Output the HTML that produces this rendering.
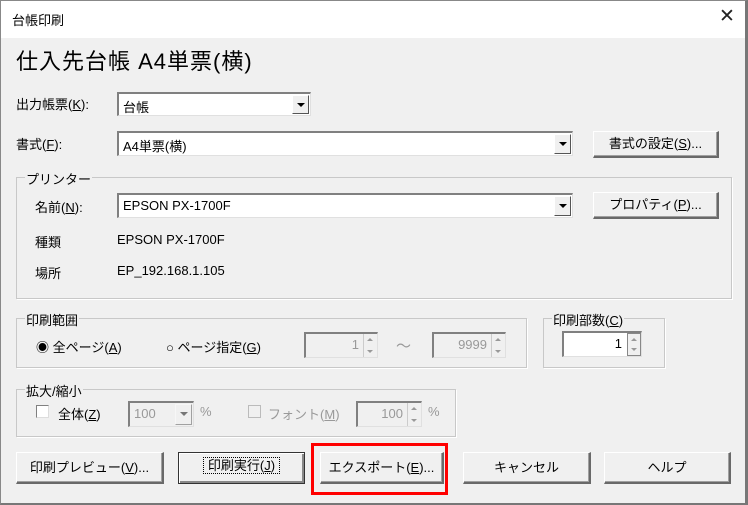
<!DOCTYPE html>
<html><head><meta charset="utf-8"><style>
*{box-sizing:border-box;margin:0;padding:0}
body{width:748px;height:505px;background:#fff;font-family:"Liberation Sans","Noto Sans CJK JP",sans-serif;font-size:13px;color:#000;position:relative;overflow:hidden}
.win{position:absolute;left:0;top:0;width:748px;height:505px;border:1px solid #888;border-right:3px solid #777;border-bottom:2px solid #777}
.client{position:absolute;left:1px;top:38px;right:3px;bottom:2px;background:#f0f0f0}
.a{position:absolute;white-space:nowrap}
.sunk{position:absolute;background:#fff;border-top:2px solid #808080;border-left:2px solid #808080;border-bottom:1px solid #e0e0e0;border-right:1px solid #e0e0e0}
.dis{background:#f0f0f0;color:#999}
.dd{position:absolute;right:1px;top:1px;bottom:1px;width:17px;background:#f0f0f0;border-right:1px solid #555;border-bottom:1px solid #555;border-top:1px solid #fff;border-left:1px solid #fff}
.dd:after{content:"";position:absolute;left:4px;top:7px;border-left:4px solid transparent;border-right:4px solid transparent;border-top:4px solid #000}
.btn{position:absolute;background:#f0f0f0;border-top:1px solid #fff;border-left:1px solid #fff;border-right:2px solid #696969;border-bottom:2px solid #696969;text-align:center;box-shadow:inset -1px -1px 0 #a0a0a0}
.grp{position:absolute;border:1px solid #c8c8c8;box-shadow:1px 1px 0 #fff}
.gt{position:absolute;top:-9px;left:8px;background:#f0f0f0;padding:0 1px}
.spin{position:absolute;right:0;top:0;bottom:0;width:14px;border-left:1px solid #ccc}
.spin:before{content:"";position:absolute;left:3px;top:4px;border-left:3px solid transparent;border-right:3px solid transparent;border-bottom:3px solid #999}
.spin:after{content:"";position:absolute;left:3px;bottom:4px;border-left:3px solid transparent;border-right:3px solid transparent;border-top:3px solid #999}
.cb{position:absolute;width:13px;height:13px;background:#fff;border-top:1px solid #808080;border-left:1px solid #808080;border-right:1px solid #ddd;border-bottom:1px solid #ddd}
</style></head><body>
<div class="win"></div>
<div class="a" style="left:12px;top:10px;font-size:13px">台帳印刷</div>
<div class="a" style="left:719px;top:5px;font-size:19px;font-weight:normal;color:#222">✕</div>
<div class="client"></div>
<div class="a" style="left:16px;top:44px;font-size:22px;letter-spacing:1px">仕入先台帳 A4単票(横)</div>

<div class="a" style="left:16px;top:94px">出力帳票(<u>K</u>):</div>
<div class="sunk" style="left:117px;top:92px;width:194px;height:24px"><span class="a" style="left:4px;top:3px">台帳</span><div class="dd"></div></div>

<div class="a" style="left:16px;top:134px">書式(<u>F</u>):</div>
<div class="sunk" style="left:117px;top:131px;width:456px;height:25px"><span class="a" style="left:4px;top:3px">A4単票(横)</span><div class="dd"></div></div>
<div class="btn" style="left:593px;top:131px;width:126px;height:27px;line-height:24px">書式の設定(<u>S</u>)...</div>

<div class="grp" style="left:16px;top:177px;width:716px;height:122px"><span class="gt">プリンター</span></div>
<div class="a" style="left:35px;top:197px">名前(<u>N</u>):</div>
<div class="sunk" style="left:117px;top:193px;width:456px;height:25px"><span class="a" style="left:4px;top:3px">EPSON PX-1700F</span><div class="dd"></div></div>
<div class="btn" style="left:593px;top:192px;width:126px;height:27px;line-height:24px">プロパティ(<u>P</u>)...</div>
<div class="a" style="left:35px;top:232px">種類</div>
<div class="a" style="left:117px;top:232px">EPSON PX-1700F</div>
<div class="a" style="left:35px;top:263px">場所</div>
<div class="a" style="left:117px;top:263px">EP_192.168.1.105</div>

<div class="grp" style="left:16px;top:318px;width:511px;height:50px"><span class="gt">印刷範囲</span></div>
<div class="a" style="left:36px;top:337px">◉ 全ページ(<u>A</u>)</div>
<div class="a" style="left:166px;top:337px">○ ページ指定(<u>G</u>)</div>
<div class="sunk dis" style="left:304px;top:332px;width:74px;height:26px"><span class="a" style="right:18px;top:3px">1</span><div class="spin"></div></div>
<div class="a" style="left:396px;top:335px;color:#999;font-size:15px">～</div>
<div class="sunk dis" style="left:432px;top:332px;width:74px;height:26px"><span class="a" style="right:18px;top:3px">9999</span><div class="spin"></div></div>

<div class="grp" style="left:543px;top:318px;width:122px;height:50px"><span class="gt">印刷部数(<u>C</u>)</span></div>
<div class="sunk" style="left:562px;top:331px;width:80px;height:26px"><span class="a" style="right:19px;top:3px">1</span><div class="spin" style="background:#f0f0f0;border:1px solid #888"></div></div>

<div class="grp" style="left:16px;top:389px;width:440px;height:48px"><span class="gt">拡大/縮小</span></div>
<div class="cb" style="left:36px;top:405px"></div>
<div class="a" style="left:58px;top:404px">全体(<u>Z</u>)</div>
<div class="sunk dis" style="left:128px;top:401px;width:66px;height:26px"><span class="a" style="left:4px;top:3px">100</span><div class="dd" style="opacity:.5"></div></div>
<div class="a" style="left:200px;top:404px;color:#999">%</div>
<div class="cb" style="left:248px;top:405px;background:#f0f0f0;border-color:#bbb"></div>
<div class="a" style="left:268px;top:404px;color:#999">フォント(<u>M</u>)</div>
<div class="sunk dis" style="left:356px;top:401px;width:66px;height:26px"><span class="a" style="right:18px;top:3px">100</span><div class="spin"></div></div>
<div class="a" style="left:428px;top:404px;color:#999">%</div>

<div class="btn" style="left:16px;top:452px;width:148px;height:32px;line-height:29px">印刷プレビュー(<u>V</u>)...</div>
<div class="btn" style="left:178px;top:452px;width:127px;height:32px;line-height:26px;border:1px solid #333;box-shadow:inset 1px 1px 0 #fff,inset -2px -2px 0 #888"><span style="border:1px dotted #000;padding:0 4px">印刷実行(<u>J</u>)</span></div>
<div class="btn" style="left:320px;top:452px;width:124px;height:32px;line-height:29px">エクスポート(<u>E</u>)...</div>
<div class="btn" style="left:463px;top:452px;width:128px;height:32px;line-height:29px">キャンセル</div>
<div class="btn" style="left:604px;top:452px;width:127px;height:32px;line-height:29px">ヘルプ</div>
<div class="a" style="left:311px;top:443px;width:137px;height:52px;border:3px solid #f00"></div>
</body></html>
